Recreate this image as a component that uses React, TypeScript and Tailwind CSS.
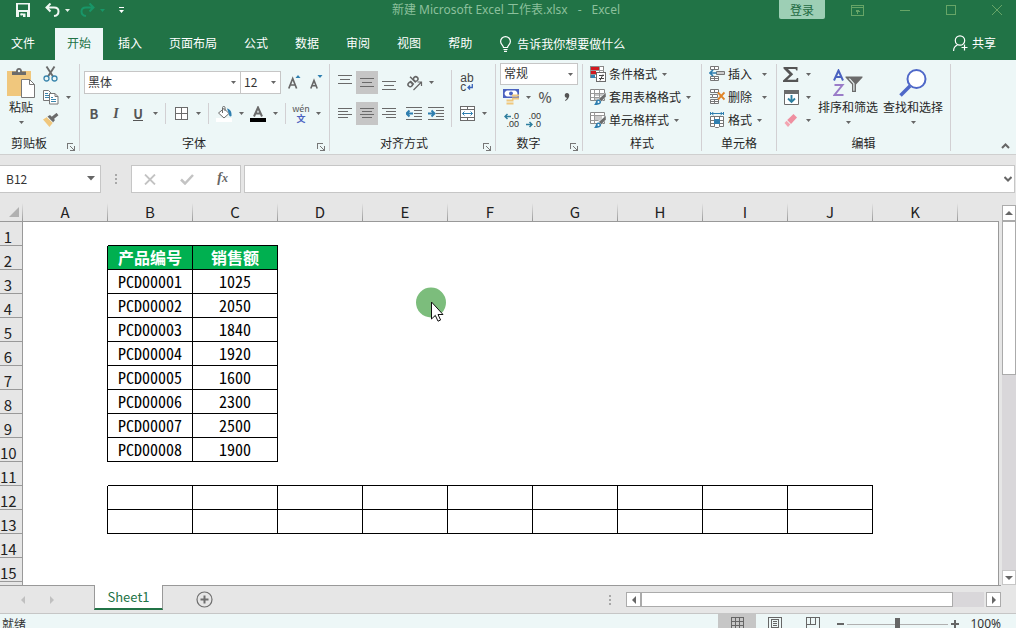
import React from "react";

type Kids = { children?: React.ReactNode };

const Caret = ({ className = "fill-[#666]" }: { className?: string }) => (
  <svg width="5" height="3" viewBox="0 0 5 3" className={`shrink-0 ${className}`} aria-hidden="true">
    <path d="M0 0h5L2.500 3z" />
  </svg>
);

const CaretButton = ({ label }: { label: string }) => (
  <button aria-label={label} className="flex h-5 w-3 shrink-0 items-center justify-center">
    <Caret />
  </button>
);

const Tool = ({ label, on, children }: Kids & { label: string; on?: boolean }) => (
  <button
    aria-label={label}
    className={`flex w-[22px] shrink-0 items-center justify-center self-stretch ${on ? "bg-[#c6c6c6]" : ""}`}
  >
    {children}
  </button>
);

const Sep = () => <span className="mx-1 h-[21px] w-px bg-[#d2d0d3]" />;

function Group({ name, launcher, className = "", children }: Kids & { name: string; launcher?: boolean; className?: string }) {
  return (
    <section aria-label={name} className={`flex shrink-0 flex-col border-r border-[#d2d0d3] ${className}`}>
      <div className="flex h-[71px]">{children}</div>
      <div className="flex h-4 items-end">
        <span className={`flex-1 text-center leading-4 ${launcher ? "pr-1" : ""}`}>{name}</span>
        {launcher && (
          <button aria-label={`${name}设置`} className="flex w-[17px] justify-center">
            <svg width="8" height="8" viewBox="0 0 8 8" fill="none" stroke="#777" shapeRendering="crispEdges">
              <path d="M0.500 6V0.500H6M3 3l4 4M7.500 3v4.500H3" />
            </svg>
          </button>
        )}
      </div>
    </section>
  );
}

const Rows = ({ children }: Kids) => <div className="flex flex-col gap-[3px]">{children}</div>;
const Row = ({ children }: Kids) => <div className="flex h-5 items-center">{children}</div>;
const WideRows = ({ children }: Kids) => <div className="flex flex-col gap-2 pt-[7px]">{children}</div>;
const WideRow = ({ children }: Kids) => <div className="flex h-[23px] items-center">{children}</div>;

function Picker({ label, value, className }: { label: string; value: string; className: string }) {
  return (
    <div className={`relative flex shrink-0 items-center ${className}`}>
      <select
        aria-label={label}
        defaultValue={value}
        className="h-full w-full appearance-none border border-[#c6c6c6] bg-white pb-0.5 pl-[3px] text-xs text-[#333]"
      >
        <option>{value}</option>
      </select>
      <span className="pointer-events-none absolute right-[5px] flex">
        <Caret />
      </span>
    </div>
  );
}

const Big = ({ name, className = "", children }: Kids & { name: string; className?: string }) => (
  <button className={`flex shrink-0 flex-col items-center pt-1 ${className}`}>
    <span className="flex h-[30px] items-center">{children}</span>
    <span className="leading-[18px] whitespace-nowrap">{name}</span>
    <span className="mt-[5px] flex">
      <Caret />
    </span>
  </button>
);

const LabelTool = ({ name, wide, children }: Kids & { name: string; wide?: boolean }) => (
  <button className="flex h-5 items-center gap-[3px] whitespace-nowrap">
    {children}
    <span>{name}</span>
    <span className={wide ? "ml-[7px]" : "ml-0.5"}>
      <Caret />
    </span>
  </button>
);

/* ---------- icons ---------- */

const Lines = ({ d }: { d: string }) => (
  <svg width="16" height="15" viewBox="0 0 16 15" fill="none" stroke="#6a6a6a" shapeRendering="crispEdges">
    <path d={d} />
  </svg>
);

const PasteIcon = () => (
  <svg width="28" height="30" viewBox="0 0 28 30">
    <path d="M0 3h24v25H0z" fill="#f0c77d" />
    <path d="M5 7V3.500h4C9 1 10.500 0 12 0s3 1 3 3.500h4V7z" fill="#6b6b6b" />
    <circle cx="12" cy="3" r="1.200" fill="#edf7f7" />
    <path d="M14.500 11.500h8l5 5v13h-13z" fill="#fff" stroke="#777" />
    <path d="M22.500 11.500v5h5" fill="none" stroke="#777" />
  </svg>
);

const CutIcon = () => (
  <svg width="15" height="16" viewBox="0 0 15 16" fill="none">
    <path d="M3.500 0.500L10 10.500M11.500 0.500L5 10.500" stroke="#6b6b6b" strokeWidth="1.900" />
    <circle cx="3.500" cy="12.500" r="2.500" stroke="#3b86ad" strokeWidth="1.300" />
    <circle cx="11.500" cy="12.500" r="2.500" stroke="#3b86ad" strokeWidth="1.300" />
  </svg>
);

const CopyIcon = () => (
  <svg width="16" height="15" viewBox="0 0 16 15" fill="#fff" stroke="#777">
    <path d="M0.500 0.500h5l3 3v7h-8z" />
    <path d="M2 3.500h3M2 5.500h4M2 7.500h4" stroke="#3b86ad" />
    <path d="M6.500 3.500h5.500l3 3v7.500H6.500z" />
    <path d="M12 3.500v3h3" fill="none" />
    <path d="M8 7.500h2M8 9.500h5M8 11.500h5" stroke="#3b86ad" />
  </svg>
);

const BrushIcon = () => (
  <svg width="16" height="14" viewBox="0 0 16 14">
    <path d="M0 6.500L4 4l6 5.500L6.500 14z" fill="#f0c77d" />
    <path d="M4.500 3.500L7 2l5 5-2 2.500z" fill="#6b6b6b" />
    <path d="M9 5.500L14.500 1" stroke="#6b6b6b" strokeWidth="3" />
    <path d="M4 4.200l6 5.500" stroke="#edf7f7" strokeWidth="0.800" />
  </svg>
);

const FontSize = ({ up }: { up?: boolean }) => (
  <svg width="13" height="17" viewBox="0 0 13 17">
    {up ? (
      <>
        <path d="M0.800 14.500L4.700 4.500L8.600 14.500M2.200 11h5" fill="none" stroke="#666" strokeWidth="1.700" />
        <path d="M7.500 4h5L10 1z" fill="#2f7fb0" />
      </>
    ) : (
      <>
        <path d="M0.800 14.500L4 6.500L7.200 14.500M2 11.800h4" fill="none" stroke="#666" strokeWidth="1.600" />
        <path d="M7.500 1h5L10 4z" fill="#2f7fb0" />
      </>
    )}
  </svg>
);

const BorderIcon = () => (
  <svg width="13" height="13" viewBox="0 0 13 13" fill="#fff" stroke="#6b6b6b" shapeRendering="crispEdges">
    <path d="M0.500 0.500h12v12h-12zM6.500 0.500v12M0.500 6.500h12" />
  </svg>
);

const FillIcon = () => (
  <svg width="16" height="16" viewBox="0 0 16 16">
    <path d="M0 12h16v4H0z" fill="#fff" />
    <path d="M8 2.500l5 5-5 4.500-5.500-5z" fill="#fff" stroke="#6b6b6b" />
    <path d="M6.500 7V1.500c0-1.500 2.500-1.500 2.500 0V5" fill="none" stroke="#6b6b6b" />
    <path d="M11 2.500c3 .5 5 3 4.500 7.500-1.500 1-2.500 0-2.500-2z" fill="#2f7fb0" />
  </svg>
);

const FontColorIcon = () => (
  <svg width="16" height="16" viewBox="0 0 16 16">
    <path d="M4 10.500L8 1.500L12 10.500M5.300 7.500h5.400" fill="none" stroke="#6b6b6b" strokeWidth="2" />
    <path d="M0 12h16v4H0z" />
  </svg>
);

const OrientIcon = () => (
  <svg width="17" height="16" viewBox="0 0 17 16" fill="none" stroke="#666" strokeWidth="1.500">
    <g transform="rotate(-45 6 7)">
      <circle cx="3" cy="7.500" r="2.200" />
      <path d="M5.500 5v5M8.300 2v8" />
      <circle cx="10.800" cy="7.500" r="2.200" />
    </g>
    <path d="M7.500 15L15 7.500M11.500 7H15.500V11" strokeWidth="1.200" />
  </svg>
);

const WrapIcon = () => (
  <span className="flex flex-col font-['Liberation_Sans',sans-serif] text-xs leading-[9px] text-[#444]" aria-hidden="true">
    <span>ab</span>
    <span className="flex items-center">
      c
      <svg width="6" height="6" viewBox="0 0 6 6" fill="none" stroke="#3a63b8" strokeWidth="1.300" className="ml-px">
        <path d="M5.300 0v3.500H1M3 1.500l-2 2 2 2" />
      </svg>
    </span>
  </span>
);

const IndentIcon = ({ right }: { right?: boolean }) => (
  <svg width="16" height="13" viewBox="0 0 16 13" fill="none" stroke="#6a6a6a" shapeRendering="crispEdges">
    <path d="M0 0.500h16M8 3.500h8M8 6.500h8M8 9.500h8M0 12.500h16" />
    <path
      d={right ? "M0 6.500h6M3.500 3.500l3 3-3 3" : "M1 6.500h6M3.500 3.500l-3 3 3 3"}
      stroke="#2f7fb0"
      strokeWidth="2"
      shapeRendering="auto"
    />
  </svg>
);

const MergeIcon = () => (
  <svg width="15" height="15" viewBox="0 0 15 15" fill="#fff" stroke="#6b6b6b">
    <path d="M0.500 0.500h14v14h-14zM0.500 3.500h14M0.500 11.500h14M7.500 0.500v3M7.500 11.500v3" shapeRendering="crispEdges" />
    <path d="M2.500 7.500h10M4.500 5.500l-2 2 2 2M10.500 5.500l2 2-2 2" fill="none" stroke="#2f7fb0" />
  </svg>
);

const MoneyIcon = () => (
  <svg width="17" height="17" viewBox="0 0 17 17">
    <path d="M0.800 0.800h14.400v7.400H0.800z" fill="#fff" stroke="#4a62c0" strokeWidth="1.600" />
    <path d="M1 1h3L1 4zM15 1h-3l3 3zM1 8h3L1 5z" fill="#4a62c0" />
    <circle cx="8" cy="4.500" r="2" fill="#4a62c0" />
    <path d="M9 5.500h7v2H9zM9 8.500h7v2H9zM3.500 10.500h7v2h-7zM3.500 13.500h7v2h-7z" fill="#f0c77d" />
  </svg>
);

const Arrow = ({ left }: { left?: boolean }) => (
  <svg width="7" height="7" viewBox="0 0 7 7" fill="none" stroke="#2f7f9f" strokeWidth="1.500" className="shrink-0">
    <path d={left ? "M7 3.500H1M3.500 1L1 3.500 3.500 6" : "M0 3.500h6M3.500 1L6 3.500 3.500 6"} />
  </svg>
);

const DecimalIcon = ({ more }: { more?: boolean }) => (
  <span className="flex flex-col font-['Liberation_Sans',sans-serif] text-[9px] leading-[8px] text-[#333]" aria-hidden="true">
    <span className="flex w-4 items-center justify-end">
      {more && <Arrow left />}
      {more ? ".0" : ".00"}
    </span>
    <span className="flex w-4 items-center justify-end">
      {!more && <Arrow />}
      {more ? ".00" : ".0"}
    </span>
  </span>
);

const CondIcon = () => (
  <svg width="16" height="16" viewBox="0 0 16 16" shapeRendering="crispEdges">
    <path d="M0.500 0.500h13v11h-13z" fill="#fff" stroke="#888" />
    <path d="M0 4.500h14M0 8.500h14M9.500 0v12" stroke="#999" />
    <path d="M1 1h8v3H1zM1 5h5v3H1z" fill="#d2181f" />
    <path d="M1 9h4v3H1z" fill="#2f7fb0" />
    <path d="M6.500 6.500h9v9h-9z" fill="#fff" stroke="#6b6b6b" />
    <path d="M9 10h5v-1H9zM9 13h5v-1H9z" fill="#444" />
    <path d="M10 14.500l3-6" stroke="#444" shapeRendering="auto" />
  </svg>
);

const TableStyleIcon = ({ cell }: { cell?: boolean }) => (
  <svg width="16" height="16" viewBox="0 0 16 16">
    <path d="M0.500 0.500h14v11h-14z" fill="#fff" stroke="#888" />
    <path d={cell ? "M4 3.500h8v5H4z" : "M4 4h10v3H4zM4 8h7v3H4z"} fill="#c9c9c9" />
    <path
      d={cell ? "M0.500 3.500h14M4.500 0.500v11M0.500 8.500h8" : "M0.500 4.500h14M0.500 8.500h12M4.500 0.500v11M9.500 0.500v11"}
      stroke="#999"
    />
    <path d="M16 3.500v4L11.500 12.500 8.500 10z" fill="#6b6b6b" stroke="#edf7f7" strokeWidth="0.500" />
    <path d="M8 10.500c2 0 3.500 1.500 3 3-.5 2-3.500 2.500-7 2.500 2-1.500 1.500-5 4-5.500z" fill="#2f7fb0" />
    <circle cx="8.500" cy="13" r="1" fill="#fff" />
  </svg>
);

const CellIcon = ({ kind }: { kind: "insert" | "delete" | "format" }) => (
  <svg width="16" height="16" viewBox="0 0 16 16" fill="#fff" stroke="#777">
    {kind === "format" ? (
      <>
        <path d="M1.500 4.500h13v10h-4l-1 1h-3l-1-1h-4zM1.500 8.500h13M1.500 11.500h13M5.500 4.500v10M10.500 4.500v10" />
        <path d="M5 7h6v5H5z" fill="#2f7fb0" stroke="none" />
        <path d="M1 1.500h14M1.500 0v3M14.500 0v3M4.500 0l-2 1.500 2 1.500M11.500 0l2 1.500-2 1.500" fill="none" stroke="#2f7fb0" />
      </>
    ) : (
      <>
        <path d="M1.500 0.500h8v3h-8zM5.500 0.500v3M1.500 10.500h8v4h-8zM5.500 10.500v4M1.500 12.500h8" />
        {kind === "insert" ? (
          <>
            <path d="M7.500 5.500h8v3h-8z" fill="#ccc" />
            <path d="M1 7h6.500M4 4L1 7l3 3" fill="none" stroke="#2f7fb0" strokeWidth="1.700" />
          </>
        ) : (
          <>
            <path d="M3.500 5.500h5v3h-5zM1 5.500h2M1 8.500h2" />
            <path d="M9 3.500l6.500 7M15.500 3.500l-6.500 7" fill="none" stroke="#e08427" strokeWidth="1.900" />
          </>
        )}
      </>
    )}
  </svg>
);

const SumIcon = () => (
  <svg width="16" height="15" viewBox="0 0 16 15">
    <path d="M0.500 0H14.500V3.500H13.300L12.500 2H5L10.200 7.300L4.300 12.800H13L14 11H15.200V15H0V13.500L6.500 7.500L0.500 1.500Z" fill="#555" />
  </svg>
);

const FillDownIcon = () => (
  <svg width="15" height="15" viewBox="0 0 15 15">
    <path d="M0.500 0.500h14v14h-14z" fill="#fff" stroke="#6b6b6b" />
    <path d="M0 0h15v4H0z" fill="#6b6b6b" />
    <path d="M7.500 5v7M4 8.500l3.500 3.500L11 8.500" fill="none" stroke="#2f7f9f" strokeWidth="1.900" />
  </svg>
);

const EraserIcon = () => (
  <svg width="14" height="13" viewBox="0 0 14 13">
    <path d="M9.500 0L13 3.500 7 10 3.200 6z" fill="#ef8fa0" />
    <path d="M2.600 6.800L6.300 10.600 4 13 0.500 9z" fill="#f3a5b1" />
  </svg>
);

const SortIcon = () => (
  <svg width="30" height="28" viewBox="0 0 30 28" fill="none">
    <path d="M1 11.500L5.500 1.500L10 11.500M2.500 8h6" stroke="#4a62c0" strokeWidth="2" />
    <path d="M1.500 16h8L1.500 26H10.500" stroke="#9a7cc8" strokeWidth="2" />
    <path d="M12.500 7.500H29.500V8.500L23 15.500V23H19V15.500L12.500 8.500Z" fill="#6b6b6b" />
    <path d="M15.500 9.500L20.300 14.700V21.700H21.500V14.500L17 9.500Z" fill="#edf7f7" />
  </svg>
);

const FindIcon = () => (
  <svg width="28" height="28" viewBox="0 0 28 28" fill="none" stroke="#4f68c8">
    <path d="M11 17L1.500 26.500" strokeWidth="3.500" />
    <circle cx="17.500" cy="10" r="9" fill="#fff" strokeWidth="2" />
  </svg>
);

/* ---------- header ---------- */

function TitleBar() {
  return (
    <div className="grid h-5 grid-cols-[1fr_auto_1fr] items-center">
      <div className="flex items-center pl-4">
        <button aria-label="保存">
          <svg width="14" height="14" viewBox="0 0 14 14" fill="#f0f7f3" fillRule="evenodd">
            <path d="M0 0h14v14H0zM2 1.500v5.500h10V1.500zM3 9v5h8V9zM4.500 10.500v2h2v-2z" />
            <path d="M4.500 10.500h5V14H7v-2H4.500z" />
          </svg>
        </button>
        <button aria-label="撤消" className="ml-[15px]">
          <svg width="15" height="14" viewBox="0 0 15 14" fill="none" stroke="#f0f7f3" strokeWidth="2">
            <path d="M5.500 0.500L1.500 4.500l4 4M2 4.500h7c6 0 6 7.500 0 8.500" />
          </svg>
        </button>
        <button aria-label="撤消列表" className="ml-[5px]">
          <Caret className="fill-[#e6f2ea]" />
        </button>
        <button aria-label="重做" className="ml-2.5">
          <svg width="15" height="14" viewBox="0 0 15 14" fill="none" stroke="#189668" strokeWidth="2">
            <path d="M9.500 0.500l4 4-4 4M13 4.500H6c-6 0-6 7.500 0 8.500" />
          </svg>
        </button>
        <button aria-label="重做列表" className="ml-[5px]">
          <Caret className="fill-[#189668]" />
        </button>
        <button aria-label="自定义快速访问工具栏" className="ml-3.5">
          <svg width="5" height="6" viewBox="0 0 5 6" fill="#fff">
            <path d="M0 0h5v1H0zM0 3h5L2.500 6z" />
          </svg>
        </button>
      </div>
      <h1 className="flex gap-2.5 pr-1 font-['Noto_Sans','Noto_Sans_CJK_SC',sans-serif] text-xs leading-5 whitespace-pre text-[#8cc09c]">
        <span>新建 Microsoft Excel 工作表.xlsx</span>
        <span>-</span>
        <span>Excel</span>
      </h1>
      <div className="flex items-center justify-end pr-3.5">
        <button className="mb-px h-[19px] w-[46px] rounded-b-xs bg-[#9dcfb5] text-[#1f6a42]">登录</button>
        <div className="ml-[26px] flex items-center gap-9 text-[#67a567]">
          <button aria-label="功能区显示选项">
            <svg width="13" height="11" viewBox="0 0 13 11" fill="none" stroke="currentColor" shapeRendering="crispEdges">
              <path d="M0.500 0.500h12v9.500h-12zM0.500 2.500h12M6.500 4.500v4M4.500 6.500h1v-1h2v1h1" />
            </svg>
          </button>
          <button aria-label="最小化">
            <svg width="10" height="10" viewBox="0 0 10 10" stroke="currentColor" shapeRendering="crispEdges">
              <path d="M0 5.500h10" />
            </svg>
          </button>
          <button aria-label="最大化">
            <svg width="10" height="10" viewBox="0 0 10 10" fill="none" stroke="currentColor" shapeRendering="crispEdges">
              <path d="M0.500 0.500h9v9h-9z" />
            </svg>
          </button>
          <button aria-label="关闭">
            <svg width="10" height="10" viewBox="0 0 10 10" stroke="currentColor">
              <path d="M0 0l10 10M10 0L0 10" />
            </svg>
          </button>
        </div>
      </div>
    </div>
  );
}

const TABS = ["开始", "插入", "页面布局", "公式", "数据", "审阅", "视图", "帮助"];

function TabBar() {
  return (
    <nav className="mt-2 flex h-8 items-stretch pl-[11px] text-white">
      <button className="mr-5 pb-0.5">文件</button>
      <div className="flex gap-[3px]">
        {TABS.map((t, i) => (
          <button key={t} className={`px-3 pb-0.5 ${i === 0 ? "bg-[#edf7f7] text-[#217346]" : ""}`}>
            {t}
          </button>
        ))}
      </div>
      <button className="ml-4 flex items-center gap-1.5">
        <svg width="11" height="16" viewBox="0 0 11 16" fill="none" stroke="#fff" strokeWidth="1.200">
          <path d="M3.500 11.500c0-2-2.900-3-2.900-6a4.900 4.900 0 0 1 9.800 0c0 3-2.900 4-2.900 6zM3.500 13.500h4M4 15.400h3" />
        </svg>
        告诉我你想要做什么
      </button>
      <button className="mr-5 ml-auto flex items-center gap-1 pb-0.5">
        <svg width="15" height="16" viewBox="0 0 15 16" fill="none" stroke="#fff" strokeWidth="1.200">
          <circle cx="7" cy="5.500" r="4.700" />
          <path d="M0.600 16c0-3 1.400-5 3.800-6M11.500 9.500v6M8.500 12.500h6" />
        </svg>
        共享
      </button>
    </nav>
  );
}

function Ribbon() {
  return (
    <div className="flex border-b border-[#cfcfcf] bg-[#edf7f7] pt-1 pb-[3px] text-[#262626]">
      <Group name="剪贴板" launcher className="w-20">
        <Big name="粘贴" className="mr-2 ml-[7px]">
          <PasteIcon />
        </Big>
        <Rows>
          <Row>
            <button aria-label="剪切">
              <CutIcon />
            </button>
          </Row>
          <Row>
            <button aria-label="复制">
              <CopyIcon />
            </button>
            <span className="ml-[3px] flex">
              <CaretButton label="复制选项" />
            </span>
          </Row>
          <Row>
            <button aria-label="格式刷">
              <BrushIcon />
            </button>
          </Row>
        </Rows>
      </Group>

      <Group name="字体" launcher className="w-[250px]">
        <WideRows>
          <div className="flex h-[23px] items-center pl-1">
            <Picker label="字体" value="黑体" className="h-[23px] w-[157px]" />
            <Picker label="字号" value="12" className="-ml-px h-[23px] w-[41px]" />
            <span className="ml-0.5 flex self-stretch">
              <Tool label="增大字号">
                <FontSize up />
              </Tool>
              <Tool label="减小字号">
                <FontSize />
              </Tool>
            </span>
          </div>
          <div className="flex h-[23px] items-center pl-[3px] text-[#555]">
            <Tool label="加粗">
              <b className="text-[13px]">B</b>
            </Tool>
            <Tool label="倾斜">
              <b className="font-['Liberation_Serif',serif] text-sm italic">I</b>
            </Tool>
            <Tool label="下划线">
              <b className="border-b border-[#555] text-[13px] leading-[13px]">U</b>
            </Tool>
            <CaretButton label="下划线选项" />
            <Sep />
            <Tool label="边框">
              <BorderIcon />
            </Tool>
            <CaretButton label="边框选项" />
            <Sep />
            <Tool label="填充颜色">
              <FillIcon />
            </Tool>
            <CaretButton label="填充颜色选项" />
            <Tool label="字体颜色">
              <FontColorIcon />
            </Tool>
            <CaretButton label="字体颜色选项" />
            <Sep />
            <Tool label="拼音">
              <span className="flex flex-col items-center text-[9px] leading-[10px]">
                <span>wén</span>
                <b className="text-[9px] text-[#4a62c0]">文</b>
              </span>
            </Tool>
            <CaretButton label="拼音选项" />
          </div>
        </WideRows>
      </Group>

      <Group name="对齐方式" launcher className="w-[166px] pl-1">
        <WideRows>
          <WideRow>
            <Tool label="顶端对齐">
              <Lines d="M1 0.500h14M3 4.500h10M1 8.500h14" />
            </Tool>
            <Tool label="垂直居中" on>
              <Lines d="M1 3.500h14M3 7.500h10M1 11.500h14" />
            </Tool>
            <Tool label="底端对齐">
              <Lines d="M1 6.500h14M3 10.500h10M1 14.500h14" />
            </Tool>
            <span className="ml-[3px] flex items-center self-stretch">
              <Tool label="方向">
                <OrientIcon />
              </Tool>
              <CaretButton label="方向选项" />
            </span>
          </WideRow>
          <WideRow>
            <Tool label="左对齐">
              <Lines d="M1 2.500h14M1 5.500h10M1 8.500h14M1 11.500h10" />
            </Tool>
            <Tool label="居中" on>
              <Lines d="M1 2.500h14M3 5.500h10M1 8.500h14M3 11.500h10" />
            </Tool>
            <Tool label="右对齐">
              <Lines d="M1 2.500h14M5 5.500h10M1 8.500h14M5 11.500h10" />
            </Tool>
            <span className="ml-[3px] flex self-stretch">
              <Tool label="减少缩进量">
                <IndentIcon />
              </Tool>
              <Tool label="增加缩进量">
                <IndentIcon right />
              </Tool>
            </span>
          </WideRow>
        </WideRows>
        <span className="mx-1 mt-1.5 mb-2 w-px bg-[#d2d0d3]" />
        <WideRows>
          <WideRow>
            <Tool label="自动换行">
              <WrapIcon />
            </Tool>
          </WideRow>
          <WideRow>
            <Tool label="合并后居中">
              <MergeIcon />
            </Tool>
            <CaretButton label="合并选项" />
          </WideRow>
        </WideRows>
      </Group>

      <Group name="数字" launcher className="w-[87px]">
        <div className="pl-1">
          <Rows>
            <Row>
              <Picker label="数字格式" value="常规" className="h-[22px] w-[78px]" />
            </Row>
            <Row>
              <Tool label="会计数字格式">
                <MoneyIcon />
              </Tool>
              <CaretButton label="会计格式选项" />
              <Tool label="百分比样式">
                <span className="text-sm font-medium text-[#555]">%</span>
              </Tool>
              <Tool label="千位分隔样式">
                <svg width="6" height="8" viewBox="0 0 6 8" fill="#555">
                  <path d="M3 0c3 0 3.500 5-1.500 8l-.5-.8C2.500 6 3 5.300 2.800 4.800 0 5 0 0 3 0z" />
                </svg>
              </Tool>
            </Row>
            <Row>
              <Tool label="增加小数位数">
                <DecimalIcon more />
              </Tool>
              <Tool label="减少小数位数">
                <DecimalIcon />
              </Tool>
            </Row>
          </Rows>
        </div>
      </Group>

      <Group name="样式" className="w-[119px]">
        <div className="flex flex-col gap-[3px] pl-[7px]">
          <LabelTool name="条件格式">
            <CondIcon />
          </LabelTool>
          <LabelTool name="套用表格格式">
            <TableStyleIcon />
          </LabelTool>
          <LabelTool name="单元格样式">
            <TableStyleIcon cell />
          </LabelTool>
        </div>
      </Group>

      <Group name="单元格" className="w-[75px]">
        <div className="flex flex-col gap-[3px] pl-[7px]">
          <LabelTool name="插入" wide>
            <CellIcon kind="insert" />
          </LabelTool>
          <LabelTool name="删除" wide>
            <CellIcon kind="delete" />
          </LabelTool>
          <LabelTool name="格式">
            <CellIcon kind="format" />
          </LabelTool>
        </div>
      </Group>

      <Group name="编辑" className="w-[174px]">
        <div className="pl-[3px]">
          <Rows>
            <Row>
              <Tool label="自动求和">
                <SumIcon />
              </Tool>
              <CaretButton label="求和选项" />
            </Row>
            <Row>
              <Tool label="填充">
                <FillDownIcon />
              </Tool>
              <CaretButton label="填充选项" />
            </Row>
            <Row>
              <Tool label="清除">
                <EraserIcon />
              </Tool>
              <CaretButton label="清除选项" />
            </Row>
          </Rows>
        </div>
        <Big name="排序和筛选" className="ml-1">
          <SortIcon />
        </Big>
        <Big name="查找和选择" className="ml-[5px]">
          <FindIcon />
        </Big>
      </Group>

      <button aria-label="折叠功能区" className="mr-1.5 mb-0.5 ml-auto self-end">
        <svg width="9" height="6" viewBox="0 0 9 6" fill="none" stroke="#666" strokeWidth="2">
          <path d="M1 5l3.500-3.500L8 5" />
        </svg>
      </button>
    </div>
  );
}

const Dots = () => (
  <svg width="2" height="10" viewBox="0 0 2 10" fill="#a8a8a8" className="shrink-0">
    <path d="M0 0h2v2H0zM0 4h2v2H0zM0 8h2v2H0z" />
  </svg>
);

function FormulaBar() {
  return (
    <div className="flex h-10 items-start pt-2.5 pr-px">
      <div className="relative flex h-7 w-[101px] items-center">
        <input
          aria-label="名称框"
          defaultValue="B12"
          className="h-full w-full border border-l-0 border-[#c6c6c6] bg-white pb-0.5 pl-1.5 text-xs text-[#333]"
        />
        <svg width="8" height="5" viewBox="0 0 8 5" fill="#666" className="absolute right-1.5 mb-0.5">
          <path d="M0 0h8L4 4.500z" />
        </svg>
      </div>
      <span className="mx-3.5 flex h-7 items-center">
        <Dots />
      </span>
      <div className="flex h-7 w-[110px] items-center justify-between border border-[#c6c6c6] bg-white pr-3 pl-3">
        <button aria-label="取消">
          <svg width="12" height="11" viewBox="0 0 12 11" stroke="#c3c3c3" strokeWidth="1.800">
            <path d="M1 0.500l10 10M11 0.500L1 10.500" />
          </svg>
        </button>
        <button aria-label="输入">
          <svg width="14" height="11" viewBox="0 0 14 11" fill="none" stroke="#c3c3c3" strokeWidth="2.500">
            <path d="M1 5.500L5 9.500L13 1" />
          </svg>
        </button>
        <button
          aria-label="插入函数"
          className="pb-0.5 font-['Liberation_Serif',serif] text-sm leading-4 font-bold text-[#666] italic"
        >
          f<span className="text-xs">x</span>
        </button>
      </div>
      <div className="relative ml-[3px] flex h-7 flex-1 items-center">
        <input aria-label="编辑栏" className="h-full w-full border border-[#c6c6c6] bg-white px-1 text-xs" />
        <button aria-label="展开编辑栏" className="absolute right-[3px]">
          <svg width="8" height="6" viewBox="0 0 8 6" fill="none" stroke="#666" strokeWidth="2">
            <path d="M0.500 1L4 4.500L7.500 1" />
          </svg>
        </button>
      </div>
    </div>
  );
}

/* ---------- worksheet ---------- */

const COLS = ["A", "B", "C", "D", "E", "F", "G", "H", "I", "J", "K"];
const ROWS = Array.from({ length: 15 }, (_, i) => i + 1);
const SALES = ["1025", "2050", "1840", "1920", "1600", "2300", "2500", "1900"];

function cellText(row: number, col: number) {
  if (row === 2) return col === 1 ? "产品编号" : col === 2 ? "销售额" : "";
  if (row >= 3 && row <= 10) {
    if (col === 1) return `PCD0000${row - 2}`;
    if (col === 2) return SALES[row - 3];
  }
  return "";
}

function inBox(row: number, col: number) {
  return (row >= 2 && row <= 10 && col >= 1 && col <= 2) || (row >= 12 && row <= 13 && col >= 1 && col <= 9);
}

function Sheet() {
  return (
    <div className="min-w-0 flex-1 overflow-hidden pt-2">
      <table className="w-full table-fixed border-separate border-spacing-0 bg-white text-[15px]">
        <colgroup>
          <col className="w-[23px]" />
          {COLS.map((c) => (
            <col key={c} className="w-[85px]" />
          ))}
          <col />
        </colgroup>
        <thead>
          <tr className="h-[19px] bg-[#e6e6e6] text-[#222]">
            <th className="border-b border-[#999] bg-linear-to-b from-[#e6e6e6] to-[#999] bg-[length:1px_100%] bg-right bg-no-repeat p-0">
              <svg width="10" height="10" viewBox="0 0 10 10" fill="#b1b1b1" className="ml-[9px]">
                <path d="M10 0v10H0z" />
              </svg>
            </th>
            {COLS.map((c) => (
              <th
                key={c}
                scope="col"
                className="border-b border-[#999] bg-linear-to-b from-[#e6e6e6] to-[#999] bg-[length:1px_100%] bg-right bg-no-repeat py-0 pr-px pl-0 leading-[18px] font-normal"
              >
                {c}
              </th>
            ))}
            <th className="border-b border-[#999] p-0" />
          </tr>
        </thead>
        <tbody>
          {ROWS.map((r) => (
            <tr key={r} className="h-6">
              <th
                scope="row"
                className="border-r border-b border-[#999] bg-[#e6e6e6] py-0 pr-1.5 pl-0 align-bottom leading-[17px] font-normal text-[#222]"
              >
                {r}
              </th>
              {COLS.map((c, i) => {
                const head = r === 2 && (i === 1 || i === 2);
                const right = inBox(r, i) || inBox(r, i + 1);
                const bottom = inBox(r, i) || inBox(r + 1, i);
                return (
                  <td
                    key={c}
                    className={`p-0 text-center text-base leading-[21px] ${right ? "border-r border-r-black" : ""} ${
                      bottom ? "border-b border-b-black" : ""
                    } ${head ? "bg-[#00b050] font-bold text-white" : "text-black [font-feature-settings:'hwid']"}`}
                  >
                    {cellText(r, i)}
                  </td>
                );
              })}
              <td className="border-r border-[#999] p-0" />
            </tr>
          ))}
          <tr className="h-6">
            <th className="border-r border-[#999] bg-[#e6e6e6] p-0" />
            <td colSpan={12} className="border-r border-[#999] p-0" />
          </tr>
        </tbody>
      </table>
    </div>
  );
}

function Triangle({ dir, className = "fill-[#666]" }: { dir: "up" | "down" | "left" | "right"; className?: string }) {
  const d = { up: "M0 6l4-4 4 4z", down: "M0 2l4 4 4-4z", left: "M6 0L2 4l4 4z", right: "M2 0l4 4-4 4z" }[dir];
  return (
    <svg width="8" height="8" viewBox="0 0 8 8" className={className}>
      <path d={d} />
    </svg>
  );
}

function VerticalScroll() {
  return (
    <div className="ml-[3px] flex w-3.5 flex-col overflow-hidden pt-2.5">
      <button aria-label="向上滚动" className="flex h-4 items-center justify-center border border-[#ababab] bg-white">
        <Triangle dir="up" />
      </button>
      <div className="flex flex-1 flex-col bg-[#d9d7da]">
        <div className="h-[44%] border border-[#ababab] bg-white" />
      </div>
      <button aria-label="向下滚动" className="flex h-[15px] items-center justify-center border border-[#c6c6c6] bg-white">
        <Triangle dir="down" />
      </button>
    </div>
  );
}

function SheetTabs() {
  return (
    <div className="flex h-7 pr-[15px]">
      <div className="flex w-[94px] items-center gap-[21px] border-t border-[#999] pl-[19px]">
        <button aria-label="上一张工作表">
          <Triangle dir="left" className="fill-[#c0c0c0]" />
        </button>
        <button aria-label="下一张工作表">
          <Triangle dir="right" className="fill-[#c0c0c0]" />
        </button>
      </div>
      <button className="h-[25px] w-[69px] border-x border-b-2 border-x-[#999] border-b-[#217346] bg-white text-[13px] leading-[22px] text-[#217346]">
        Sheet1
      </button>
      <div className="flex flex-1 items-center border-t border-[#999] pl-[33px]">
        <button aria-label="新工作表">
          <svg width="17" height="17" viewBox="0 0 17 17" fill="none" stroke="#6f6f6f">
            <circle cx="8.500" cy="8.500" r="7.500" strokeWidth="1.200" />
            <path d="M8.500 4.500v8M4.500 8.500h8" strokeWidth="2" />
          </svg>
        </button>
      </div>
      <div className="flex w-[392px] items-center border-t border-[#999]">
        <Dots />
        <button aria-label="向左滚动" className="ml-[15px] flex h-[15px] w-[15px] items-center justify-center border border-[#ababab] bg-white">
          <Triangle dir="left" />
        </button>
        <div className="flex h-[15px] flex-1 bg-[#d9d7da]">
          <div className="w-[91%] border border-[#ababab] bg-white" />
        </div>
        <button aria-label="向右滚动" className="ml-0.5 flex h-[15px] w-[15px] items-center justify-center border border-[#ababab] bg-white">
          <Triangle dir="right" />
        </button>
      </div>
    </div>
  );
}

function StatusBar() {
  return (
    <footer className="h-[15px] overflow-hidden border-t border-[#c6c6c6] bg-[#edf7f7] text-[#333]">
      <div className="flex h-5 items-center pr-[15px] pl-0.5">
        <span>就绪</span>
        <button aria-label="普通视图" className="ml-auto flex h-5 w-[38px] justify-center bg-[#c6c6c6] pt-[3px]">
          <svg width="13" height="13" viewBox="0 0 13 13" fill="none" stroke="#666" shapeRendering="crispEdges">
            <path d="M0.500 0.500h12v12h-12zM4.500 0v13M8.500 0v13M0 4.500h13M0 8.500h13" />
          </svg>
        </button>
        <button aria-label="页面布局视图" className="flex h-5 w-[38px] justify-center pt-[3px]">
          <svg width="14" height="13" viewBox="0 0 14 13" fill="none" stroke="#666" shapeRendering="crispEdges">
            <path d="M0.500 0.500h13v12h-13zM3.500 2.500h7v8h-7zM5 4.500h4M5 6.500h4M5 8.500h4" />
          </svg>
        </button>
        <button aria-label="分页预览" className="flex h-5 w-[38px] justify-center pt-[3px]">
          <svg width="14" height="13" viewBox="0 0 14 13" fill="none" stroke="#666" shapeRendering="crispEdges">
            <path d="M0.500 0.500h13v12h-13zM4.500 0v7M9.500 0v7M0 7.500h10" />
          </svg>
        </button>
        <button aria-label="缩小" className="ml-[5px]">
          <svg width="7" height="8" viewBox="0 0 7 8" fill="#666">
            <path d="M0 3h7v2H0z" />
          </svg>
        </button>
        <input
          type="range"
          aria-label="显示比例"
          min="0"
          max="100"
          defaultValue="50"
          className="mx-[3px] h-3 w-[101px] appearance-none bg-transparent [&::-webkit-slider-runnable-track]:h-px [&::-webkit-slider-runnable-track]:bg-[#b0b0b0] [&::-webkit-slider-thumb]:-mt-1.5 [&::-webkit-slider-thumb]:h-3 [&::-webkit-slider-thumb]:w-[5px] [&::-webkit-slider-thumb]:appearance-none [&::-webkit-slider-thumb]:bg-[#666]"
        />
        <button aria-label="放大">
          <svg width="8" height="8" viewBox="0 0 8 8" fill="#666">
            <path d="M0 3h8v2H0zM3 0h2v8H3z" />
          </svg>
        </button>
        <span className="ml-[11px] font-['Noto_Sans',sans-serif] text-xs">100%</span>
      </div>
    </footer>
  );
}

function Pointer() {
  return (
    <div className="pointer-events-none absolute top-[287px] left-[416px]" aria-hidden="true">
      <svg width="32" height="36" viewBox="0 0 32 36">
        <circle cx="15" cy="15.500" r="15" fill="#7cbd7c" />
        <path
          d="M15.500 15v17l3.800-3.600 2.700 5.800 2.600-1.200-2.600-5.500h5z"
          fill="#fff"
          stroke="#111"
          strokeWidth="1"
        />
      </svg>
    </div>
  );
}

export default function App() {
  return (
    <div className="relative flex h-screen flex-col overflow-hidden bg-[#e6e6e6] font-['Noto_Sans_CJK_SC',sans-serif] text-xs">
      <header className="bg-[#217346]">
        <TitleBar />
        <TabBar />
      </header>
      <Ribbon />
      <FormulaBar />
      <main className="flex min-h-0 flex-1">
        <Sheet />
        <VerticalScroll />
      </main>
      <SheetTabs />
      <StatusBar />
      <Pointer />
    </div>
  );
}
